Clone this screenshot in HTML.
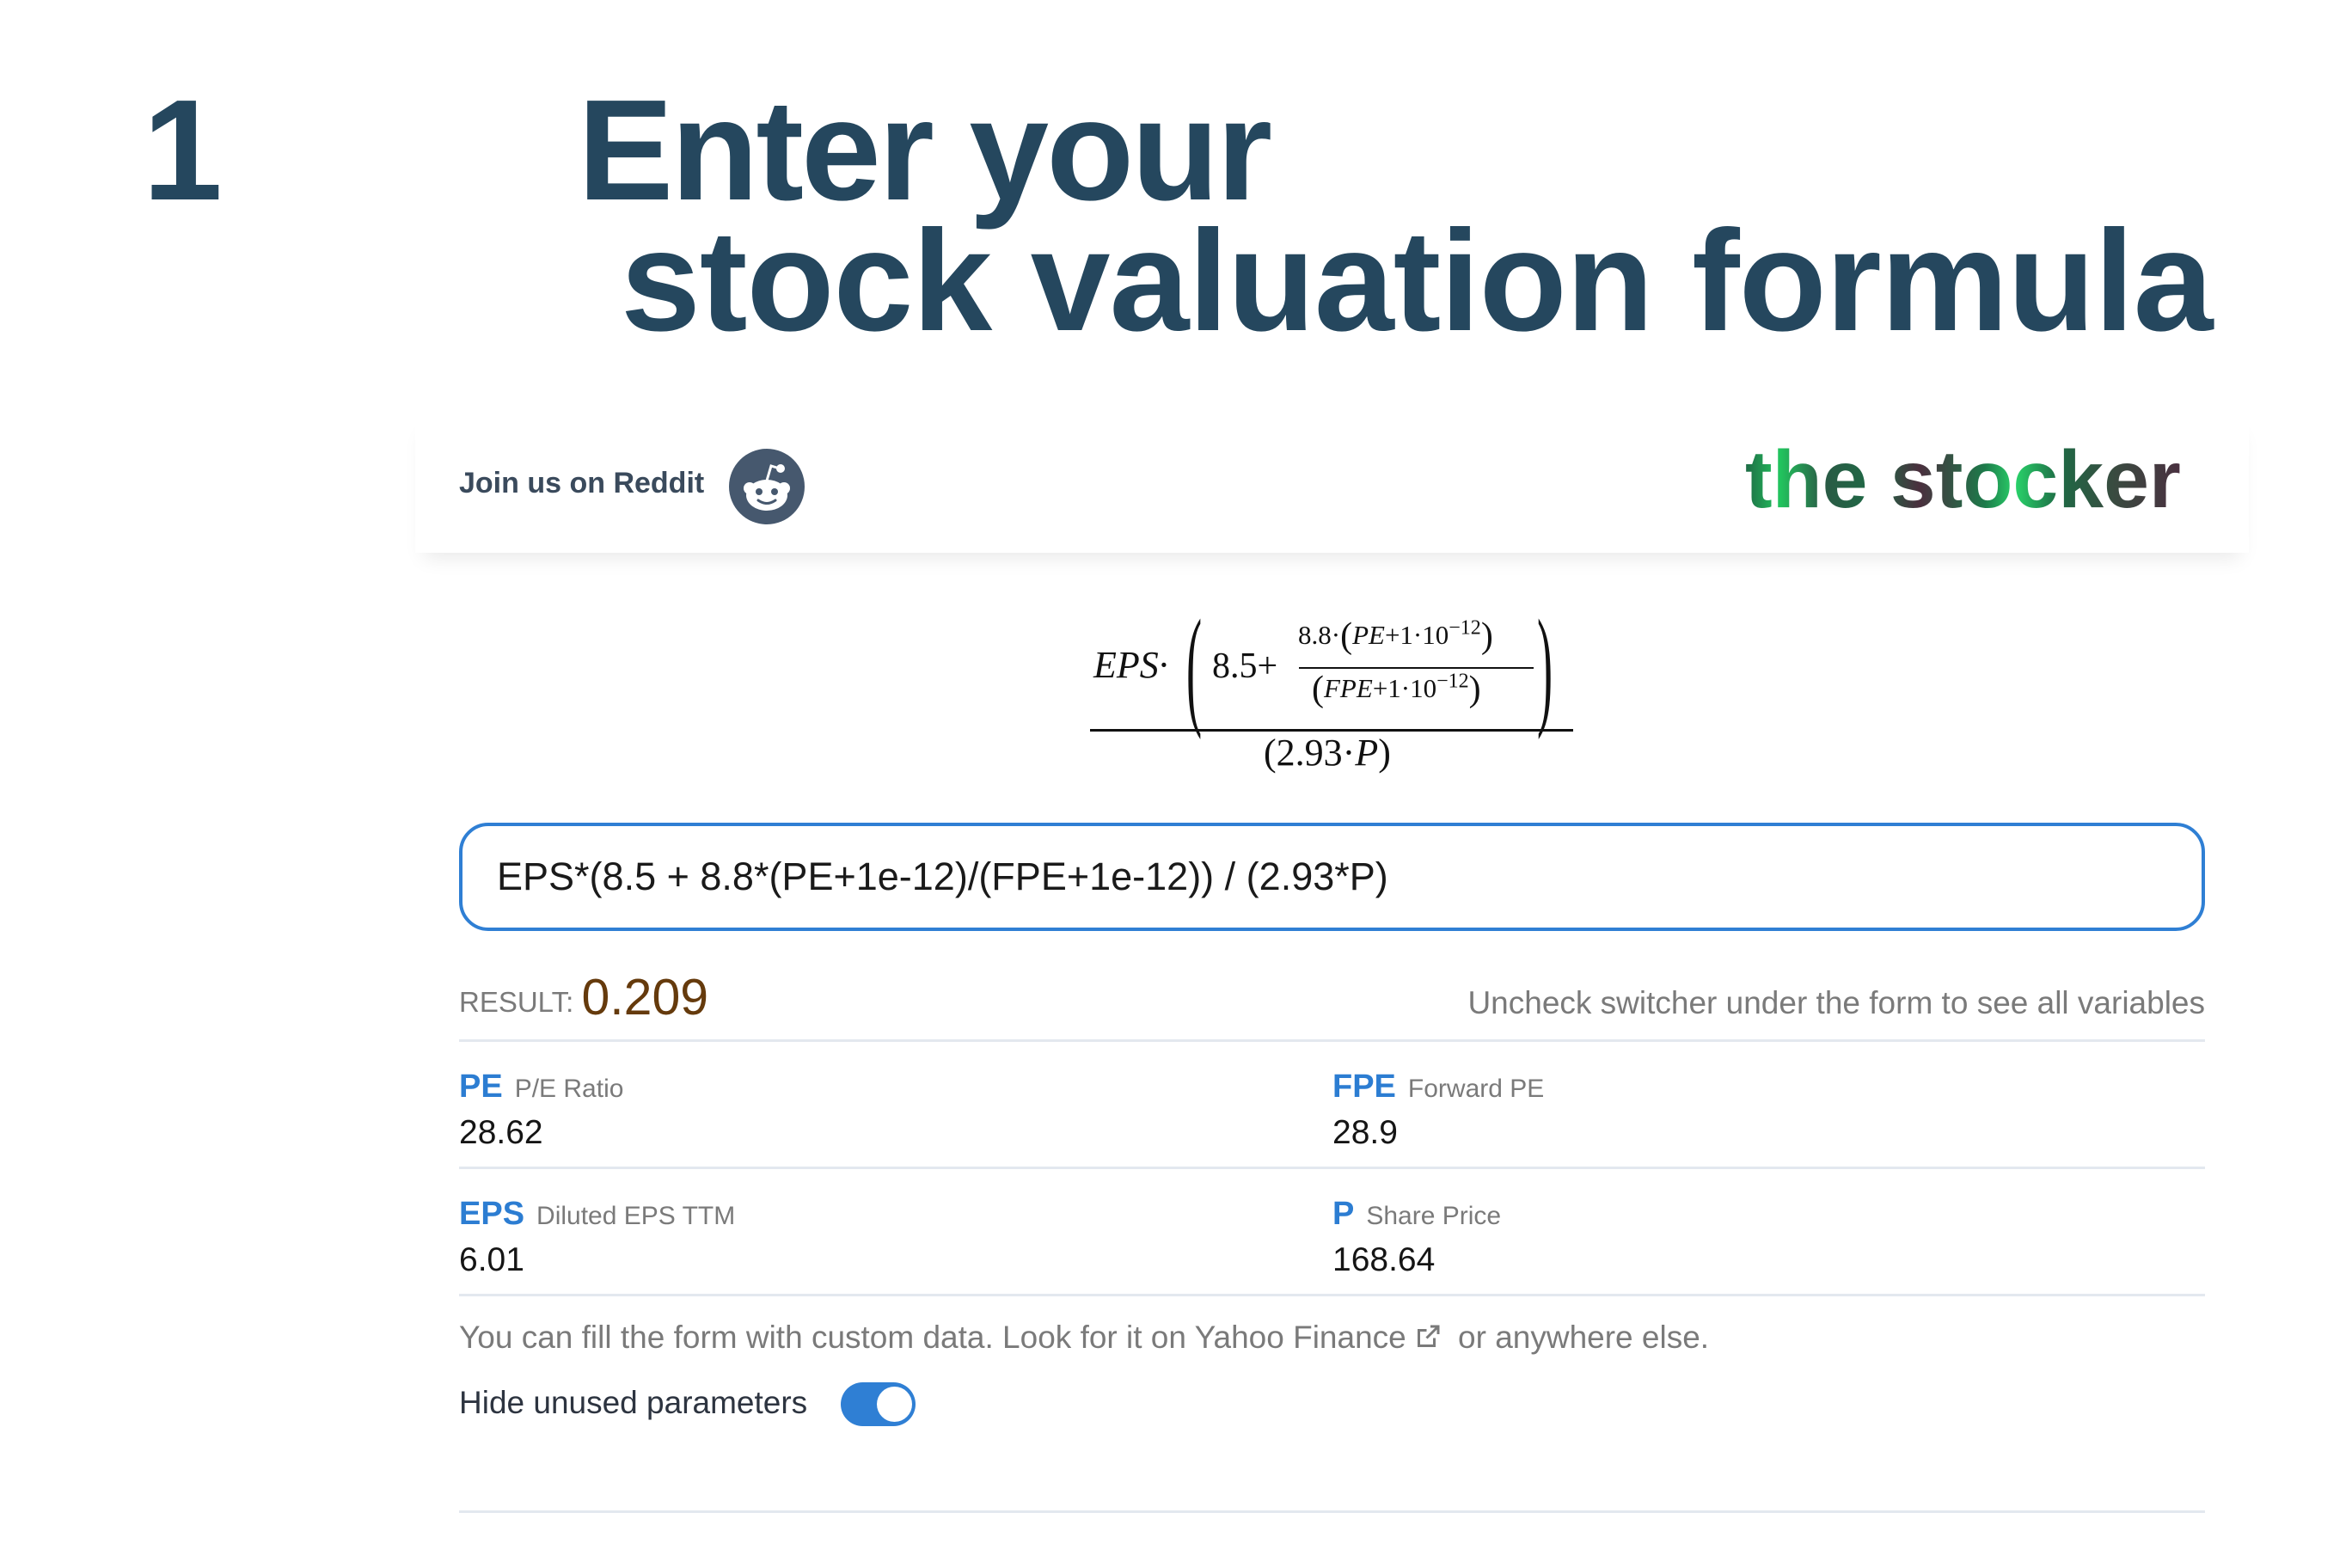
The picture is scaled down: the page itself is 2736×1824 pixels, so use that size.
<!DOCTYPE html>
<html><head><meta charset="utf-8">
<style>
*{margin:0;padding:0;box-sizing:border-box}
body{width:2736px;height:1824px;background:#fff;position:relative;overflow:hidden;font-family:"Liberation Sans",sans-serif}
.a{position:absolute;white-space:nowrap}
.t{color:#25475e;font-weight:bold;font-size:167px;line-height:1}
.m{font-family:"Liberation Serif",serif;color:#111}
.i{font-style:italic}
.lb{color:#2c7dd2;font-size:38px;font-weight:bold}
.sm{color:#7a7a7a;font-size:30px;margin-left:14px;font-weight:normal}
.v{font-size:39px;color:#151515}
.hr{position:absolute;left:534px;width:2031px;height:3px;background:#e3e8ef}
</style></head><body>
<div class="a t" style="left:166px;top:92px">1</div>
<div class="a t" style="left:672px;top:92px;letter-spacing:-3px">Enter your</div>
<div class="a t" style="left:722px;top:244px;letter-spacing:-1px">stock valuation formula</div>

<div class="a" style="left:483px;top:480px;width:2133px;height:163px;background:#fff;box-shadow:0 16px 22px -10px rgba(0,0,0,0.09)"></div>
<div class="a" style="left:534px;top:543px;font-size:34px;font-weight:bold;color:#3a4a5c">Join us on Reddit</div>
<svg class="a" style="left:848px;top:522px" width="88" height="88" viewBox="0 0 88 88">
<circle cx="44" cy="44" r="44" fill="#46586e"/>
<circle cx="24" cy="46" r="7" fill="#fff"/><circle cx="64" cy="46" r="7" fill="#fff"/>
<ellipse cx="44" cy="54" rx="24" ry="18" fill="#fff"/>
<path d="M44 37 L49 20 L59 23" stroke="#fff" stroke-width="3" fill="none"/>
<circle cx="60" cy="23" r="5" fill="#fff"/>
<circle cx="35" cy="50" r="4" fill="#46586e"/><circle cx="53" cy="50" r="4" fill="#46586e"/>
<path d="M34 60 Q44 67 54 60" stroke="#46586e" stroke-width="3" fill="none" stroke-linecap="round"/>
</svg>
<div class="a" style="left:2030px;top:506px;font-size:95px;font-weight:bold;line-height:1.1;background:linear-gradient(90deg,#1e6a45 0%,#22c55e 8%,#2a5a45 18%,#1e6a45 30%,#4a2f3e 40%,#1d7a4a 55%,#29d36a 62%,#1e6a45 72%,#3a4a40 85%,#4a3040 100%);-webkit-background-clip:text;background-clip:text;color:transparent">the stocker</div>

<!-- formula -->
<div class="a m i" style="left:1272px;top:748px;font-size:44px">EPS·</div>
<div class="a m" style="left:1380px;top:698px;font-size:155px;line-height:1;transform:scaleX(.35);transform-origin:left top">(</div>
<div class="a m" style="left:1410px;top:751px;font-size:42px">8.5+</div>
<div class="a m" style="left:1510px;top:716px;font-size:31px">8.8·<span style="font-size:42px;vertical-align:-4px">(</span><span class="i">PE</span>+1·10<sup style="font-size:24px">−12</sup><span style="font-size:42px;vertical-align:-4px">)</span></div>
<div class="a" style="left:1511px;top:776px;width:273px;height:2px;background:#111"></div>
<div class="a m" style="left:1526px;top:778px;font-size:31px"><span style="font-size:42px;vertical-align:-4px">(</span><span class="i">FPE</span>+1·10<sup style="font-size:24px">−12</sup><span style="font-size:42px;vertical-align:-4px">)</span></div>
<div class="a m" style="left:1788px;top:698px;font-size:155px;line-height:1;transform:scaleX(.35);transform-origin:left top">)</div>
<div class="a" style="left:1268px;top:848px;width:562px;height:3px;background:#111"></div>
<div class="a m" style="left:1470px;top:850px;font-size:44px">(2.93·<span class="i">P</span>)</div>

<div class="a" style="left:534px;top:957px;width:2031px;height:126px;border:4px solid #2f7fd4;border-radius:34px"></div>
<div class="a" style="left:578px;top:994px;font-size:45px;color:#1a1a1a">EPS*(8.5 + 8.8*(PE+1e-12)/(FPE+1e-12)) / (2.93*P)</div>

<div class="a" style="left:534px;top:1126px;font-size:33px;color:#7a7a7a">RESULT: <span style="font-size:59px;color:#653a0c;vertical-align:-3px">0.209</span></div>
<div class="a" style="right:171px;top:1146px;font-size:37px;color:#7a7a7a">Uncheck switcher under the form to see all variables</div>
<div class="hr" style="top:1209px"></div>

<div class="a lb" style="left:534px;top:1243px">PE<span class="sm">P/E Ratio</span></div>
<div class="a v" style="left:534px;top:1296px">28.62</div>
<div class="a lb" style="left:1550px;top:1243px">FPE<span class="sm">Forward PE</span></div>
<div class="a v" style="left:1550px;top:1296px">28.9</div>
<div class="hr" style="top:1357px"></div>
<div class="a lb" style="left:534px;top:1391px">EPS<span class="sm">Diluted EPS TTM</span></div>
<div class="a v" style="left:534px;top:1444px">6.01</div>
<div class="a lb" style="left:1550px;top:1391px">P<span class="sm">Share Price</span></div>
<div class="a v" style="left:1550px;top:1444px">168.64</div>
<div class="hr" style="top:1505px"></div>

<div class="a" style="left:534px;top:1535px;font-size:37px;color:#7a7a7a">You can fill the form with custom data. Look for it on Yahoo Finance<svg width="38" height="36" viewBox="0 0 24 24" style="vertical-align:-5px;margin:0 6px"><path d="M14 4h6v6M20 4l-9 9M17 13v6H5V7h6" fill="none" stroke="#7a7a7a" stroke-width="2"/></svg> or anywhere else.</div>
<div class="a" style="left:534px;top:1611px;font-size:37px;color:#2d3440">Hide unused parameters</div>
<div class="a" style="left:978px;top:1608px;width:87px;height:51px;border-radius:26px;background:#2f7fd4"></div>
<div class="a" style="left:1020px;top:1613px;width:41px;height:41px;border-radius:50%;background:#fff"></div>
<div class="hr" style="top:1757px"></div>
</body></html>
